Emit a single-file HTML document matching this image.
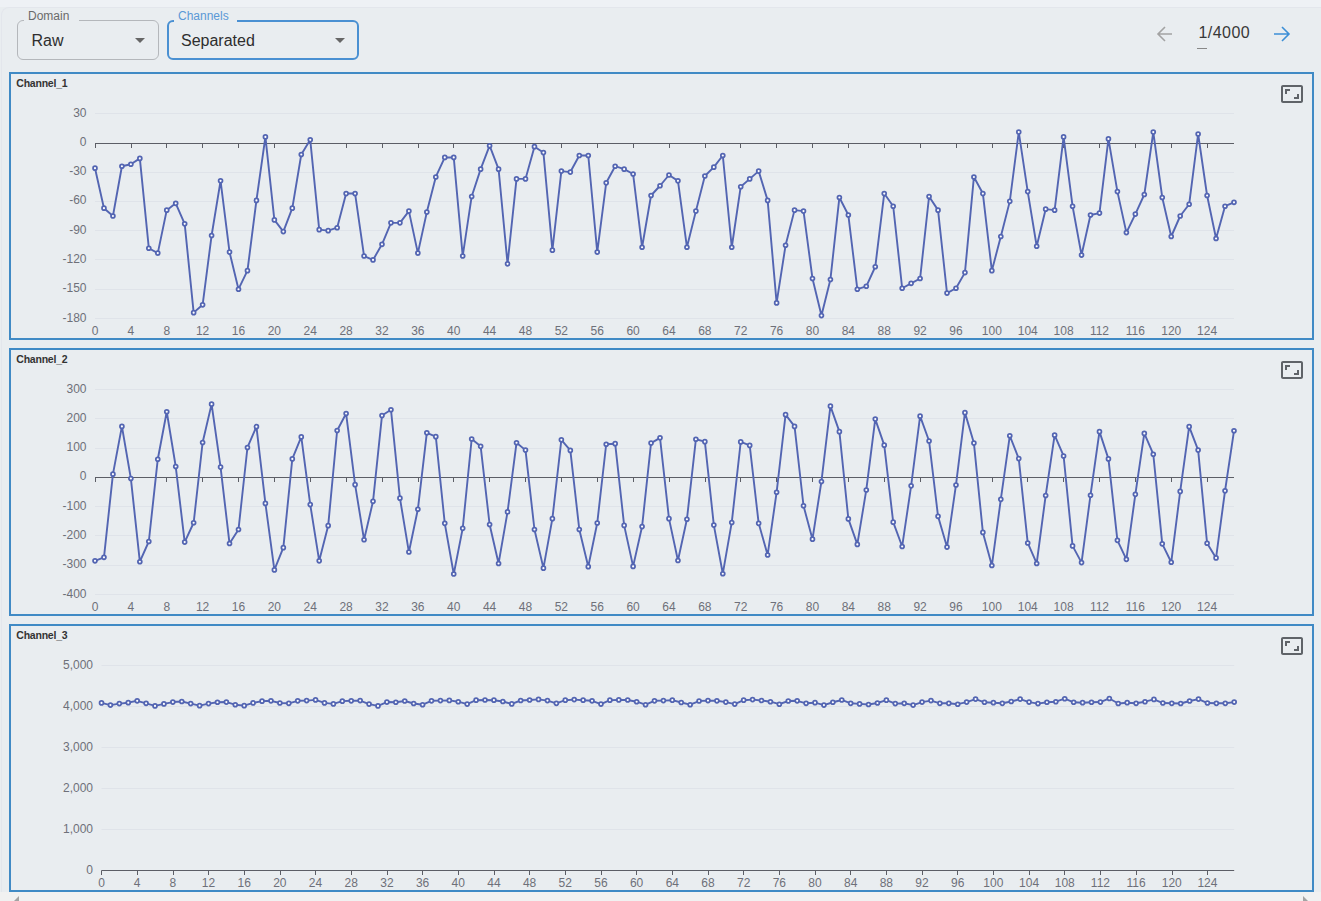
<!DOCTYPE html>
<html><head><meta charset="utf-8">
<style>
html,body{margin:0;padding:0;}
body{width:1321px;height:901px;overflow:hidden;background:#e9edf0;position:relative;font-family:"Liberation Sans",sans-serif;}
.box{position:absolute;left:9px;width:1301px;height:264px;border:2px solid #408ac5;}
.sel{position:absolute;top:20px;height:40px;box-sizing:border-box;border-radius:6px;}
.sel .lab{position:absolute;top:-12px;font-size:12px;line-height:14px;padding:0 4px;background:#e9edf0;}
.sel .val{position:absolute;top:11px;font-size:16px;line-height:18px;color:#2e2e2e;}
.sel .arr{position:absolute;top:18px;width:0;height:0;border-left:5px solid transparent;border-right:5px solid transparent;border-top:5px solid #666;}
svg{position:absolute;left:0;top:0;}
.yl,.xl{font-size:12px;fill:#6e7079;font-family:"Liberation Sans",sans-serif;}
.tt{font-size:10.5px;font-weight:bold;fill:#333;letter-spacing:-0.22px;font-family:"Liberation Sans",sans-serif;}
</style></head><body>
<div style="position:absolute;left:0;top:0;width:1321px;height:7px;background:#eef1f5;"></div>
<div style="position:absolute;left:1px;top:7px;width:1330px;height:900px;border-top:1px solid #e3e6ec;border-left:1px solid #e3e6ec;border-radius:8px 0 0 0;box-sizing:border-box;"></div>
<div style="position:absolute;left:0;top:892px;width:1321px;height:9px;background:#f1f1f1;"></div>
<div style="position:absolute;left:14px;top:896px;width:0;height:0;border-right:5px solid #a3a3a3;border-top:5px solid transparent;border-bottom:5px solid transparent;"></div>
<div style="position:absolute;left:1303px;top:896px;width:0;height:0;border-left:5px solid #a3a3a3;border-top:5px solid transparent;border-bottom:5px solid transparent;"></div>
<div class="sel" style="left:17px;width:142px;border:1px solid #b4b7bb;">
  <div class="lab" style="left:6px;color:#6a6a6a;padding:0 10px 0 4px;">Domain</div>
  <div class="val" style="left:13.5px;">Raw</div>
  <div class="arr" style="left:117px;top:17px;"></div>
</div>
<div class="sel" style="left:167px;width:192px;border:2px solid #4a90d2;">
  <div class="lab" style="left:5px;top:-13px;color:#5a98d6;padding:0 8px 0 4px;">Channels</div>
  <div class="val" style="left:12px;top:10px;">Separated</div>
  <div class="arr" style="left:166px;top:16px;"></div>
</div>
<div class="box" style="top:72px;"></div>
<div class="box" style="top:348px;"></div>
<div class="box" style="top:624px;"></div>
<svg width="1321" height="901" viewBox="0 0 1321 901">
<g stroke="#a3a3a3" stroke-width="1.6" fill="none"><path d="M1172 34H1158M1165 27L1158 34L1165 41"/></g>
<text x="1198.5" y="37.8" style="font-size:16px;fill:#383838;letter-spacing:0.45px;font-family:'Liberation Sans',sans-serif;">1/4000</text>
<line x1="1197" y1="48.5" x2="1207" y2="48.5" stroke="#888" stroke-width="1"/>
<g stroke="#3d8fd6" stroke-width="1.6" fill="none"><path d="M1274 34H1289M1282 27L1289 34L1282 41"/></g>
<line x1="95" y1="113.5" x2="1234" y2="113.5" stroke="#dfe3e9" stroke-width="1"/>
<line x1="95" y1="172.5" x2="1234" y2="172.5" stroke="#dfe3e9" stroke-width="1"/>
<line x1="95" y1="201.5" x2="1234" y2="201.5" stroke="#dfe3e9" stroke-width="1"/>
<line x1="95" y1="230.5" x2="1234" y2="230.5" stroke="#dfe3e9" stroke-width="1"/>
<line x1="95" y1="259.5" x2="1234" y2="259.5" stroke="#dfe3e9" stroke-width="1"/>
<line x1="95" y1="289.5" x2="1234" y2="289.5" stroke="#dfe3e9" stroke-width="1"/>
<line x1="95" y1="318.5" x2="1234" y2="318.5" stroke="#dfe3e9" stroke-width="1"/>
<text x="86.5" y="116.5" text-anchor="end" class="yl">30</text>
<text x="86.5" y="145.79" text-anchor="end" class="yl">0</text>
<text x="86.5" y="175.07" text-anchor="end" class="yl">-30</text>
<text x="86.5" y="204.36" text-anchor="end" class="yl">-60</text>
<text x="86.5" y="233.64" text-anchor="end" class="yl">-90</text>
<text x="86.5" y="262.93" text-anchor="end" class="yl">-120</text>
<text x="86.5" y="292.21" text-anchor="end" class="yl">-150</text>
<text x="86.5" y="321.5" text-anchor="end" class="yl">-180</text>
<line x1="95" y1="143.5" x2="1234" y2="143.5" stroke="#5c5e66" stroke-width="1"/>
<line x1="95.5" y1="143.5" x2="95.5" y2="148.0" stroke="#5c5e66" stroke-width="1"/>
<text x="95" y="334.7" text-anchor="middle" class="xl">0</text>
<line x1="131.5" y1="143.5" x2="131.5" y2="148.0" stroke="#5c5e66" stroke-width="1"/>
<text x="130.87" y="334.7" text-anchor="middle" class="xl">4</text>
<line x1="166.5" y1="143.5" x2="166.5" y2="148.0" stroke="#5c5e66" stroke-width="1"/>
<text x="166.75" y="334.7" text-anchor="middle" class="xl">8</text>
<line x1="202.5" y1="143.5" x2="202.5" y2="148.0" stroke="#5c5e66" stroke-width="1"/>
<text x="202.62" y="334.7" text-anchor="middle" class="xl">12</text>
<line x1="238.5" y1="143.5" x2="238.5" y2="148.0" stroke="#5c5e66" stroke-width="1"/>
<text x="238.5" y="334.7" text-anchor="middle" class="xl">16</text>
<line x1="274.5" y1="143.5" x2="274.5" y2="148.0" stroke="#5c5e66" stroke-width="1"/>
<text x="274.37" y="334.7" text-anchor="middle" class="xl">20</text>
<line x1="310.5" y1="143.5" x2="310.5" y2="148.0" stroke="#5c5e66" stroke-width="1"/>
<text x="310.24" y="334.7" text-anchor="middle" class="xl">24</text>
<line x1="346.5" y1="143.5" x2="346.5" y2="148.0" stroke="#5c5e66" stroke-width="1"/>
<text x="346.12" y="334.7" text-anchor="middle" class="xl">28</text>
<line x1="382.5" y1="143.5" x2="382.5" y2="148.0" stroke="#5c5e66" stroke-width="1"/>
<text x="381.99" y="334.7" text-anchor="middle" class="xl">32</text>
<line x1="418.5" y1="143.5" x2="418.5" y2="148.0" stroke="#5c5e66" stroke-width="1"/>
<text x="417.87" y="334.7" text-anchor="middle" class="xl">36</text>
<line x1="453.5" y1="143.5" x2="453.5" y2="148.0" stroke="#5c5e66" stroke-width="1"/>
<text x="453.74" y="334.7" text-anchor="middle" class="xl">40</text>
<line x1="489.5" y1="143.5" x2="489.5" y2="148.0" stroke="#5c5e66" stroke-width="1"/>
<text x="489.61" y="334.7" text-anchor="middle" class="xl">44</text>
<line x1="525.5" y1="143.5" x2="525.5" y2="148.0" stroke="#5c5e66" stroke-width="1"/>
<text x="525.49" y="334.7" text-anchor="middle" class="xl">48</text>
<line x1="561.5" y1="143.5" x2="561.5" y2="148.0" stroke="#5c5e66" stroke-width="1"/>
<text x="561.36" y="334.7" text-anchor="middle" class="xl">52</text>
<line x1="597.5" y1="143.5" x2="597.5" y2="148.0" stroke="#5c5e66" stroke-width="1"/>
<text x="597.24" y="334.7" text-anchor="middle" class="xl">56</text>
<line x1="633.5" y1="143.5" x2="633.5" y2="148.0" stroke="#5c5e66" stroke-width="1"/>
<text x="633.11" y="334.7" text-anchor="middle" class="xl">60</text>
<line x1="669.5" y1="143.5" x2="669.5" y2="148.0" stroke="#5c5e66" stroke-width="1"/>
<text x="668.98" y="334.7" text-anchor="middle" class="xl">64</text>
<line x1="705.5" y1="143.5" x2="705.5" y2="148.0" stroke="#5c5e66" stroke-width="1"/>
<text x="704.86" y="334.7" text-anchor="middle" class="xl">68</text>
<line x1="740.5" y1="143.5" x2="740.5" y2="148.0" stroke="#5c5e66" stroke-width="1"/>
<text x="740.73" y="334.7" text-anchor="middle" class="xl">72</text>
<line x1="776.5" y1="143.5" x2="776.5" y2="148.0" stroke="#5c5e66" stroke-width="1"/>
<text x="776.61" y="334.7" text-anchor="middle" class="xl">76</text>
<line x1="812.5" y1="143.5" x2="812.5" y2="148.0" stroke="#5c5e66" stroke-width="1"/>
<text x="812.48" y="334.7" text-anchor="middle" class="xl">80</text>
<line x1="848.5" y1="143.5" x2="848.5" y2="148.0" stroke="#5c5e66" stroke-width="1"/>
<text x="848.35" y="334.7" text-anchor="middle" class="xl">84</text>
<line x1="884.5" y1="143.5" x2="884.5" y2="148.0" stroke="#5c5e66" stroke-width="1"/>
<text x="884.23" y="334.7" text-anchor="middle" class="xl">88</text>
<line x1="920.5" y1="143.5" x2="920.5" y2="148.0" stroke="#5c5e66" stroke-width="1"/>
<text x="920.1" y="334.7" text-anchor="middle" class="xl">92</text>
<line x1="956.5" y1="143.5" x2="956.5" y2="148.0" stroke="#5c5e66" stroke-width="1"/>
<text x="955.98" y="334.7" text-anchor="middle" class="xl">96</text>
<line x1="992.5" y1="143.5" x2="992.5" y2="148.0" stroke="#5c5e66" stroke-width="1"/>
<text x="991.85" y="334.7" text-anchor="middle" class="xl">100</text>
<line x1="1027.5" y1="143.5" x2="1027.5" y2="148.0" stroke="#5c5e66" stroke-width="1"/>
<text x="1027.72" y="334.7" text-anchor="middle" class="xl">104</text>
<line x1="1063.5" y1="143.5" x2="1063.5" y2="148.0" stroke="#5c5e66" stroke-width="1"/>
<text x="1063.6" y="334.7" text-anchor="middle" class="xl">108</text>
<line x1="1099.5" y1="143.5" x2="1099.5" y2="148.0" stroke="#5c5e66" stroke-width="1"/>
<text x="1099.47" y="334.7" text-anchor="middle" class="xl">112</text>
<line x1="1135.5" y1="143.5" x2="1135.5" y2="148.0" stroke="#5c5e66" stroke-width="1"/>
<text x="1135.35" y="334.7" text-anchor="middle" class="xl">116</text>
<line x1="1171.5" y1="143.5" x2="1171.5" y2="148.0" stroke="#5c5e66" stroke-width="1"/>
<text x="1171.22" y="334.7" text-anchor="middle" class="xl">120</text>
<line x1="1207.5" y1="143.5" x2="1207.5" y2="148.0" stroke="#5c5e66" stroke-width="1"/>
<text x="1207.09" y="334.7" text-anchor="middle" class="xl">124</text>
<polyline points="95,168.17 103.97,208.19 112.94,216 121.91,166.21 130.87,164.26 139.84,158.4 148.81,248.21 157.78,253.1 166.75,210.14 175.72,203.31 184.69,223.81 193.65,312.64 202.62,304.83 211.59,235.52 220.56,180.86 229.53,252.12 238.5,289.21 247.46,270.67 256.43,200.38 265.4,136.93 274.37,219.9 283.34,231.62 292.31,208.19 301.28,154.5 310.24,139.86 319.21,229.67 328.18,230.64 337.15,227.71 346.12,193.55 355.09,193.55 364.06,256.02 373.02,259.93 381.99,244.31 390.96,222.83 399.93,222.83 408.9,211.12 417.87,253.1 426.83,212.1 435.8,176.95 444.77,157.43 453.74,157.43 462.71,256.02 471.68,196.48 480.65,169.14 489.61,145.71 498.58,169.14 507.55,263.83 516.52,178.9 525.49,178.9 534.46,146.69 543.43,152.55 552.39,250.17 561.36,171.1 570.33,172.07 579.3,155.48 588.27,155.48 597.24,252.12 606.2,182.81 615.17,166.21 624.14,169.14 633.11,174.02 642.08,247.24 651.05,195.5 660.02,185.74 668.98,175 677.95,180.86 686.92,247.24 695.89,211.12 704.86,175.98 713.83,167.19 722.8,155.48 731.76,247.24 740.73,186.71 749.7,178.9 758.67,171.1 767.64,200.38 776.61,302.88 785.57,245.29 794.54,210.14 803.51,211.12 812.48,278.48 821.45,315.57 830.42,279.45 839.39,197.45 848.35,215.02 857.32,289.21 866.29,286.29 875.26,266.76 884.23,193.55 893.2,206.24 902.17,288.24 911.13,283.36 920.1,278.48 929.07,196.48 938.04,210.14 947.01,293.12 955.98,288.24 964.94,272.62 973.91,176.95 982.88,193.55 991.85,270.67 1000.82,236.5 1009.79,201.36 1018.76,132.05 1027.72,191.6 1036.69,246.26 1045.66,209.17 1054.63,210.14 1063.6,136.93 1072.57,206.24 1081.54,255.05 1090.5,215.02 1099.47,213.07 1108.44,138.88 1117.41,191.6 1126.38,232.6 1135.35,214.05 1144.31,194.52 1153.28,132.05 1162.25,197.45 1171.22,236.5 1180.19,216 1189.16,204.29 1198.13,134 1207.09,195.5 1216.06,238.45 1225.03,206.24 1234,202.33" fill="none" stroke="#5365b2" stroke-width="1.9" stroke-linejoin="round"/>
<circle cx="95" cy="168.17" r="1.95" fill="#fff" stroke="#5365b2" stroke-width="1.75"/>
<circle cx="103.97" cy="208.19" r="1.95" fill="#fff" stroke="#5365b2" stroke-width="1.75"/>
<circle cx="112.94" cy="216" r="1.95" fill="#fff" stroke="#5365b2" stroke-width="1.75"/>
<circle cx="121.91" cy="166.21" r="1.95" fill="#fff" stroke="#5365b2" stroke-width="1.75"/>
<circle cx="130.87" cy="164.26" r="1.95" fill="#fff" stroke="#5365b2" stroke-width="1.75"/>
<circle cx="139.84" cy="158.4" r="1.95" fill="#fff" stroke="#5365b2" stroke-width="1.75"/>
<circle cx="148.81" cy="248.21" r="1.95" fill="#fff" stroke="#5365b2" stroke-width="1.75"/>
<circle cx="157.78" cy="253.1" r="1.95" fill="#fff" stroke="#5365b2" stroke-width="1.75"/>
<circle cx="166.75" cy="210.14" r="1.95" fill="#fff" stroke="#5365b2" stroke-width="1.75"/>
<circle cx="175.72" cy="203.31" r="1.95" fill="#fff" stroke="#5365b2" stroke-width="1.75"/>
<circle cx="184.69" cy="223.81" r="1.95" fill="#fff" stroke="#5365b2" stroke-width="1.75"/>
<circle cx="193.65" cy="312.64" r="1.95" fill="#fff" stroke="#5365b2" stroke-width="1.75"/>
<circle cx="202.62" cy="304.83" r="1.95" fill="#fff" stroke="#5365b2" stroke-width="1.75"/>
<circle cx="211.59" cy="235.52" r="1.95" fill="#fff" stroke="#5365b2" stroke-width="1.75"/>
<circle cx="220.56" cy="180.86" r="1.95" fill="#fff" stroke="#5365b2" stroke-width="1.75"/>
<circle cx="229.53" cy="252.12" r="1.95" fill="#fff" stroke="#5365b2" stroke-width="1.75"/>
<circle cx="238.5" cy="289.21" r="1.95" fill="#fff" stroke="#5365b2" stroke-width="1.75"/>
<circle cx="247.46" cy="270.67" r="1.95" fill="#fff" stroke="#5365b2" stroke-width="1.75"/>
<circle cx="256.43" cy="200.38" r="1.95" fill="#fff" stroke="#5365b2" stroke-width="1.75"/>
<circle cx="265.4" cy="136.93" r="1.95" fill="#fff" stroke="#5365b2" stroke-width="1.75"/>
<circle cx="274.37" cy="219.9" r="1.95" fill="#fff" stroke="#5365b2" stroke-width="1.75"/>
<circle cx="283.34" cy="231.62" r="1.95" fill="#fff" stroke="#5365b2" stroke-width="1.75"/>
<circle cx="292.31" cy="208.19" r="1.95" fill="#fff" stroke="#5365b2" stroke-width="1.75"/>
<circle cx="301.28" cy="154.5" r="1.95" fill="#fff" stroke="#5365b2" stroke-width="1.75"/>
<circle cx="310.24" cy="139.86" r="1.95" fill="#fff" stroke="#5365b2" stroke-width="1.75"/>
<circle cx="319.21" cy="229.67" r="1.95" fill="#fff" stroke="#5365b2" stroke-width="1.75"/>
<circle cx="328.18" cy="230.64" r="1.95" fill="#fff" stroke="#5365b2" stroke-width="1.75"/>
<circle cx="337.15" cy="227.71" r="1.95" fill="#fff" stroke="#5365b2" stroke-width="1.75"/>
<circle cx="346.12" cy="193.55" r="1.95" fill="#fff" stroke="#5365b2" stroke-width="1.75"/>
<circle cx="355.09" cy="193.55" r="1.95" fill="#fff" stroke="#5365b2" stroke-width="1.75"/>
<circle cx="364.06" cy="256.02" r="1.95" fill="#fff" stroke="#5365b2" stroke-width="1.75"/>
<circle cx="373.02" cy="259.93" r="1.95" fill="#fff" stroke="#5365b2" stroke-width="1.75"/>
<circle cx="381.99" cy="244.31" r="1.95" fill="#fff" stroke="#5365b2" stroke-width="1.75"/>
<circle cx="390.96" cy="222.83" r="1.95" fill="#fff" stroke="#5365b2" stroke-width="1.75"/>
<circle cx="399.93" cy="222.83" r="1.95" fill="#fff" stroke="#5365b2" stroke-width="1.75"/>
<circle cx="408.9" cy="211.12" r="1.95" fill="#fff" stroke="#5365b2" stroke-width="1.75"/>
<circle cx="417.87" cy="253.1" r="1.95" fill="#fff" stroke="#5365b2" stroke-width="1.75"/>
<circle cx="426.83" cy="212.1" r="1.95" fill="#fff" stroke="#5365b2" stroke-width="1.75"/>
<circle cx="435.8" cy="176.95" r="1.95" fill="#fff" stroke="#5365b2" stroke-width="1.75"/>
<circle cx="444.77" cy="157.43" r="1.95" fill="#fff" stroke="#5365b2" stroke-width="1.75"/>
<circle cx="453.74" cy="157.43" r="1.95" fill="#fff" stroke="#5365b2" stroke-width="1.75"/>
<circle cx="462.71" cy="256.02" r="1.95" fill="#fff" stroke="#5365b2" stroke-width="1.75"/>
<circle cx="471.68" cy="196.48" r="1.95" fill="#fff" stroke="#5365b2" stroke-width="1.75"/>
<circle cx="480.65" cy="169.14" r="1.95" fill="#fff" stroke="#5365b2" stroke-width="1.75"/>
<circle cx="489.61" cy="145.71" r="1.95" fill="#fff" stroke="#5365b2" stroke-width="1.75"/>
<circle cx="498.58" cy="169.14" r="1.95" fill="#fff" stroke="#5365b2" stroke-width="1.75"/>
<circle cx="507.55" cy="263.83" r="1.95" fill="#fff" stroke="#5365b2" stroke-width="1.75"/>
<circle cx="516.52" cy="178.9" r="1.95" fill="#fff" stroke="#5365b2" stroke-width="1.75"/>
<circle cx="525.49" cy="178.9" r="1.95" fill="#fff" stroke="#5365b2" stroke-width="1.75"/>
<circle cx="534.46" cy="146.69" r="1.95" fill="#fff" stroke="#5365b2" stroke-width="1.75"/>
<circle cx="543.43" cy="152.55" r="1.95" fill="#fff" stroke="#5365b2" stroke-width="1.75"/>
<circle cx="552.39" cy="250.17" r="1.95" fill="#fff" stroke="#5365b2" stroke-width="1.75"/>
<circle cx="561.36" cy="171.1" r="1.95" fill="#fff" stroke="#5365b2" stroke-width="1.75"/>
<circle cx="570.33" cy="172.07" r="1.95" fill="#fff" stroke="#5365b2" stroke-width="1.75"/>
<circle cx="579.3" cy="155.48" r="1.95" fill="#fff" stroke="#5365b2" stroke-width="1.75"/>
<circle cx="588.27" cy="155.48" r="1.95" fill="#fff" stroke="#5365b2" stroke-width="1.75"/>
<circle cx="597.24" cy="252.12" r="1.95" fill="#fff" stroke="#5365b2" stroke-width="1.75"/>
<circle cx="606.2" cy="182.81" r="1.95" fill="#fff" stroke="#5365b2" stroke-width="1.75"/>
<circle cx="615.17" cy="166.21" r="1.95" fill="#fff" stroke="#5365b2" stroke-width="1.75"/>
<circle cx="624.14" cy="169.14" r="1.95" fill="#fff" stroke="#5365b2" stroke-width="1.75"/>
<circle cx="633.11" cy="174.02" r="1.95" fill="#fff" stroke="#5365b2" stroke-width="1.75"/>
<circle cx="642.08" cy="247.24" r="1.95" fill="#fff" stroke="#5365b2" stroke-width="1.75"/>
<circle cx="651.05" cy="195.5" r="1.95" fill="#fff" stroke="#5365b2" stroke-width="1.75"/>
<circle cx="660.02" cy="185.74" r="1.95" fill="#fff" stroke="#5365b2" stroke-width="1.75"/>
<circle cx="668.98" cy="175" r="1.95" fill="#fff" stroke="#5365b2" stroke-width="1.75"/>
<circle cx="677.95" cy="180.86" r="1.95" fill="#fff" stroke="#5365b2" stroke-width="1.75"/>
<circle cx="686.92" cy="247.24" r="1.95" fill="#fff" stroke="#5365b2" stroke-width="1.75"/>
<circle cx="695.89" cy="211.12" r="1.95" fill="#fff" stroke="#5365b2" stroke-width="1.75"/>
<circle cx="704.86" cy="175.98" r="1.95" fill="#fff" stroke="#5365b2" stroke-width="1.75"/>
<circle cx="713.83" cy="167.19" r="1.95" fill="#fff" stroke="#5365b2" stroke-width="1.75"/>
<circle cx="722.8" cy="155.48" r="1.95" fill="#fff" stroke="#5365b2" stroke-width="1.75"/>
<circle cx="731.76" cy="247.24" r="1.95" fill="#fff" stroke="#5365b2" stroke-width="1.75"/>
<circle cx="740.73" cy="186.71" r="1.95" fill="#fff" stroke="#5365b2" stroke-width="1.75"/>
<circle cx="749.7" cy="178.9" r="1.95" fill="#fff" stroke="#5365b2" stroke-width="1.75"/>
<circle cx="758.67" cy="171.1" r="1.95" fill="#fff" stroke="#5365b2" stroke-width="1.75"/>
<circle cx="767.64" cy="200.38" r="1.95" fill="#fff" stroke="#5365b2" stroke-width="1.75"/>
<circle cx="776.61" cy="302.88" r="1.95" fill="#fff" stroke="#5365b2" stroke-width="1.75"/>
<circle cx="785.57" cy="245.29" r="1.95" fill="#fff" stroke="#5365b2" stroke-width="1.75"/>
<circle cx="794.54" cy="210.14" r="1.95" fill="#fff" stroke="#5365b2" stroke-width="1.75"/>
<circle cx="803.51" cy="211.12" r="1.95" fill="#fff" stroke="#5365b2" stroke-width="1.75"/>
<circle cx="812.48" cy="278.48" r="1.95" fill="#fff" stroke="#5365b2" stroke-width="1.75"/>
<circle cx="821.45" cy="315.57" r="1.95" fill="#fff" stroke="#5365b2" stroke-width="1.75"/>
<circle cx="830.42" cy="279.45" r="1.95" fill="#fff" stroke="#5365b2" stroke-width="1.75"/>
<circle cx="839.39" cy="197.45" r="1.95" fill="#fff" stroke="#5365b2" stroke-width="1.75"/>
<circle cx="848.35" cy="215.02" r="1.95" fill="#fff" stroke="#5365b2" stroke-width="1.75"/>
<circle cx="857.32" cy="289.21" r="1.95" fill="#fff" stroke="#5365b2" stroke-width="1.75"/>
<circle cx="866.29" cy="286.29" r="1.95" fill="#fff" stroke="#5365b2" stroke-width="1.75"/>
<circle cx="875.26" cy="266.76" r="1.95" fill="#fff" stroke="#5365b2" stroke-width="1.75"/>
<circle cx="884.23" cy="193.55" r="1.95" fill="#fff" stroke="#5365b2" stroke-width="1.75"/>
<circle cx="893.2" cy="206.24" r="1.95" fill="#fff" stroke="#5365b2" stroke-width="1.75"/>
<circle cx="902.17" cy="288.24" r="1.95" fill="#fff" stroke="#5365b2" stroke-width="1.75"/>
<circle cx="911.13" cy="283.36" r="1.95" fill="#fff" stroke="#5365b2" stroke-width="1.75"/>
<circle cx="920.1" cy="278.48" r="1.95" fill="#fff" stroke="#5365b2" stroke-width="1.75"/>
<circle cx="929.07" cy="196.48" r="1.95" fill="#fff" stroke="#5365b2" stroke-width="1.75"/>
<circle cx="938.04" cy="210.14" r="1.95" fill="#fff" stroke="#5365b2" stroke-width="1.75"/>
<circle cx="947.01" cy="293.12" r="1.95" fill="#fff" stroke="#5365b2" stroke-width="1.75"/>
<circle cx="955.98" cy="288.24" r="1.95" fill="#fff" stroke="#5365b2" stroke-width="1.75"/>
<circle cx="964.94" cy="272.62" r="1.95" fill="#fff" stroke="#5365b2" stroke-width="1.75"/>
<circle cx="973.91" cy="176.95" r="1.95" fill="#fff" stroke="#5365b2" stroke-width="1.75"/>
<circle cx="982.88" cy="193.55" r="1.95" fill="#fff" stroke="#5365b2" stroke-width="1.75"/>
<circle cx="991.85" cy="270.67" r="1.95" fill="#fff" stroke="#5365b2" stroke-width="1.75"/>
<circle cx="1000.82" cy="236.5" r="1.95" fill="#fff" stroke="#5365b2" stroke-width="1.75"/>
<circle cx="1009.79" cy="201.36" r="1.95" fill="#fff" stroke="#5365b2" stroke-width="1.75"/>
<circle cx="1018.76" cy="132.05" r="1.95" fill="#fff" stroke="#5365b2" stroke-width="1.75"/>
<circle cx="1027.72" cy="191.6" r="1.95" fill="#fff" stroke="#5365b2" stroke-width="1.75"/>
<circle cx="1036.69" cy="246.26" r="1.95" fill="#fff" stroke="#5365b2" stroke-width="1.75"/>
<circle cx="1045.66" cy="209.17" r="1.95" fill="#fff" stroke="#5365b2" stroke-width="1.75"/>
<circle cx="1054.63" cy="210.14" r="1.95" fill="#fff" stroke="#5365b2" stroke-width="1.75"/>
<circle cx="1063.6" cy="136.93" r="1.95" fill="#fff" stroke="#5365b2" stroke-width="1.75"/>
<circle cx="1072.57" cy="206.24" r="1.95" fill="#fff" stroke="#5365b2" stroke-width="1.75"/>
<circle cx="1081.54" cy="255.05" r="1.95" fill="#fff" stroke="#5365b2" stroke-width="1.75"/>
<circle cx="1090.5" cy="215.02" r="1.95" fill="#fff" stroke="#5365b2" stroke-width="1.75"/>
<circle cx="1099.47" cy="213.07" r="1.95" fill="#fff" stroke="#5365b2" stroke-width="1.75"/>
<circle cx="1108.44" cy="138.88" r="1.95" fill="#fff" stroke="#5365b2" stroke-width="1.75"/>
<circle cx="1117.41" cy="191.6" r="1.95" fill="#fff" stroke="#5365b2" stroke-width="1.75"/>
<circle cx="1126.38" cy="232.6" r="1.95" fill="#fff" stroke="#5365b2" stroke-width="1.75"/>
<circle cx="1135.35" cy="214.05" r="1.95" fill="#fff" stroke="#5365b2" stroke-width="1.75"/>
<circle cx="1144.31" cy="194.52" r="1.95" fill="#fff" stroke="#5365b2" stroke-width="1.75"/>
<circle cx="1153.28" cy="132.05" r="1.95" fill="#fff" stroke="#5365b2" stroke-width="1.75"/>
<circle cx="1162.25" cy="197.45" r="1.95" fill="#fff" stroke="#5365b2" stroke-width="1.75"/>
<circle cx="1171.22" cy="236.5" r="1.95" fill="#fff" stroke="#5365b2" stroke-width="1.75"/>
<circle cx="1180.19" cy="216" r="1.95" fill="#fff" stroke="#5365b2" stroke-width="1.75"/>
<circle cx="1189.16" cy="204.29" r="1.95" fill="#fff" stroke="#5365b2" stroke-width="1.75"/>
<circle cx="1198.13" cy="134" r="1.95" fill="#fff" stroke="#5365b2" stroke-width="1.75"/>
<circle cx="1207.09" cy="195.5" r="1.95" fill="#fff" stroke="#5365b2" stroke-width="1.75"/>
<circle cx="1216.06" cy="238.45" r="1.95" fill="#fff" stroke="#5365b2" stroke-width="1.75"/>
<circle cx="1225.03" cy="206.24" r="1.95" fill="#fff" stroke="#5365b2" stroke-width="1.75"/>
<circle cx="1234" cy="202.33" r="1.95" fill="#fff" stroke="#5365b2" stroke-width="1.75"/>
<text x="16.3" y="86.7" class="tt">Channel_1</text>
<g transform="translate(1280,82)"><path fill="#5f6368" d="M19 12h-2v3h-3v2h5v-5zM7 9h3V7H5v5h2V9zm14-6H3c-1.1 0-2 .9-2 2v14c0 1.1.9 2 2 2h18c1.1 0 2-.9 2-2V5c0-1.1-.9-2-2-2zm0 16.01H3V4.99h18v14.02z"/></g>
<line x1="95" y1="389.5" x2="1234" y2="389.5" stroke="#dfe3e9" stroke-width="1"/>
<line x1="95" y1="418.5" x2="1234" y2="418.5" stroke="#dfe3e9" stroke-width="1"/>
<line x1="95" y1="448.5" x2="1234" y2="448.5" stroke="#dfe3e9" stroke-width="1"/>
<line x1="95" y1="506.5" x2="1234" y2="506.5" stroke="#dfe3e9" stroke-width="1"/>
<line x1="95" y1="535.5" x2="1234" y2="535.5" stroke="#dfe3e9" stroke-width="1"/>
<line x1="95" y1="565.5" x2="1234" y2="565.5" stroke="#dfe3e9" stroke-width="1"/>
<line x1="95" y1="594.5" x2="1234" y2="594.5" stroke="#dfe3e9" stroke-width="1"/>
<text x="86.5" y="392.5" text-anchor="end" class="yl">300</text>
<text x="86.5" y="421.79" text-anchor="end" class="yl">200</text>
<text x="86.5" y="451.07" text-anchor="end" class="yl">100</text>
<text x="86.5" y="480.36" text-anchor="end" class="yl">0</text>
<text x="86.5" y="509.64" text-anchor="end" class="yl">-100</text>
<text x="86.5" y="538.93" text-anchor="end" class="yl">-200</text>
<text x="86.5" y="568.21" text-anchor="end" class="yl">-300</text>
<text x="86.5" y="597.5" text-anchor="end" class="yl">-400</text>
<line x1="95" y1="477.5" x2="1234" y2="477.5" stroke="#5c5e66" stroke-width="1"/>
<line x1="95.5" y1="477.5" x2="95.5" y2="482.0" stroke="#5c5e66" stroke-width="1"/>
<text x="95" y="610.7" text-anchor="middle" class="xl">0</text>
<line x1="131.5" y1="477.5" x2="131.5" y2="482.0" stroke="#5c5e66" stroke-width="1"/>
<text x="130.87" y="610.7" text-anchor="middle" class="xl">4</text>
<line x1="166.5" y1="477.5" x2="166.5" y2="482.0" stroke="#5c5e66" stroke-width="1"/>
<text x="166.75" y="610.7" text-anchor="middle" class="xl">8</text>
<line x1="202.5" y1="477.5" x2="202.5" y2="482.0" stroke="#5c5e66" stroke-width="1"/>
<text x="202.62" y="610.7" text-anchor="middle" class="xl">12</text>
<line x1="238.5" y1="477.5" x2="238.5" y2="482.0" stroke="#5c5e66" stroke-width="1"/>
<text x="238.5" y="610.7" text-anchor="middle" class="xl">16</text>
<line x1="274.5" y1="477.5" x2="274.5" y2="482.0" stroke="#5c5e66" stroke-width="1"/>
<text x="274.37" y="610.7" text-anchor="middle" class="xl">20</text>
<line x1="310.5" y1="477.5" x2="310.5" y2="482.0" stroke="#5c5e66" stroke-width="1"/>
<text x="310.24" y="610.7" text-anchor="middle" class="xl">24</text>
<line x1="346.5" y1="477.5" x2="346.5" y2="482.0" stroke="#5c5e66" stroke-width="1"/>
<text x="346.12" y="610.7" text-anchor="middle" class="xl">28</text>
<line x1="382.5" y1="477.5" x2="382.5" y2="482.0" stroke="#5c5e66" stroke-width="1"/>
<text x="381.99" y="610.7" text-anchor="middle" class="xl">32</text>
<line x1="418.5" y1="477.5" x2="418.5" y2="482.0" stroke="#5c5e66" stroke-width="1"/>
<text x="417.87" y="610.7" text-anchor="middle" class="xl">36</text>
<line x1="453.5" y1="477.5" x2="453.5" y2="482.0" stroke="#5c5e66" stroke-width="1"/>
<text x="453.74" y="610.7" text-anchor="middle" class="xl">40</text>
<line x1="489.5" y1="477.5" x2="489.5" y2="482.0" stroke="#5c5e66" stroke-width="1"/>
<text x="489.61" y="610.7" text-anchor="middle" class="xl">44</text>
<line x1="525.5" y1="477.5" x2="525.5" y2="482.0" stroke="#5c5e66" stroke-width="1"/>
<text x="525.49" y="610.7" text-anchor="middle" class="xl">48</text>
<line x1="561.5" y1="477.5" x2="561.5" y2="482.0" stroke="#5c5e66" stroke-width="1"/>
<text x="561.36" y="610.7" text-anchor="middle" class="xl">52</text>
<line x1="597.5" y1="477.5" x2="597.5" y2="482.0" stroke="#5c5e66" stroke-width="1"/>
<text x="597.24" y="610.7" text-anchor="middle" class="xl">56</text>
<line x1="633.5" y1="477.5" x2="633.5" y2="482.0" stroke="#5c5e66" stroke-width="1"/>
<text x="633.11" y="610.7" text-anchor="middle" class="xl">60</text>
<line x1="669.5" y1="477.5" x2="669.5" y2="482.0" stroke="#5c5e66" stroke-width="1"/>
<text x="668.98" y="610.7" text-anchor="middle" class="xl">64</text>
<line x1="705.5" y1="477.5" x2="705.5" y2="482.0" stroke="#5c5e66" stroke-width="1"/>
<text x="704.86" y="610.7" text-anchor="middle" class="xl">68</text>
<line x1="740.5" y1="477.5" x2="740.5" y2="482.0" stroke="#5c5e66" stroke-width="1"/>
<text x="740.73" y="610.7" text-anchor="middle" class="xl">72</text>
<line x1="776.5" y1="477.5" x2="776.5" y2="482.0" stroke="#5c5e66" stroke-width="1"/>
<text x="776.61" y="610.7" text-anchor="middle" class="xl">76</text>
<line x1="812.5" y1="477.5" x2="812.5" y2="482.0" stroke="#5c5e66" stroke-width="1"/>
<text x="812.48" y="610.7" text-anchor="middle" class="xl">80</text>
<line x1="848.5" y1="477.5" x2="848.5" y2="482.0" stroke="#5c5e66" stroke-width="1"/>
<text x="848.35" y="610.7" text-anchor="middle" class="xl">84</text>
<line x1="884.5" y1="477.5" x2="884.5" y2="482.0" stroke="#5c5e66" stroke-width="1"/>
<text x="884.23" y="610.7" text-anchor="middle" class="xl">88</text>
<line x1="920.5" y1="477.5" x2="920.5" y2="482.0" stroke="#5c5e66" stroke-width="1"/>
<text x="920.1" y="610.7" text-anchor="middle" class="xl">92</text>
<line x1="956.5" y1="477.5" x2="956.5" y2="482.0" stroke="#5c5e66" stroke-width="1"/>
<text x="955.98" y="610.7" text-anchor="middle" class="xl">96</text>
<line x1="992.5" y1="477.5" x2="992.5" y2="482.0" stroke="#5c5e66" stroke-width="1"/>
<text x="991.85" y="610.7" text-anchor="middle" class="xl">100</text>
<line x1="1027.5" y1="477.5" x2="1027.5" y2="482.0" stroke="#5c5e66" stroke-width="1"/>
<text x="1027.72" y="610.7" text-anchor="middle" class="xl">104</text>
<line x1="1063.5" y1="477.5" x2="1063.5" y2="482.0" stroke="#5c5e66" stroke-width="1"/>
<text x="1063.6" y="610.7" text-anchor="middle" class="xl">108</text>
<line x1="1099.5" y1="477.5" x2="1099.5" y2="482.0" stroke="#5c5e66" stroke-width="1"/>
<text x="1099.47" y="610.7" text-anchor="middle" class="xl">112</text>
<line x1="1135.5" y1="477.5" x2="1135.5" y2="482.0" stroke="#5c5e66" stroke-width="1"/>
<text x="1135.35" y="610.7" text-anchor="middle" class="xl">116</text>
<line x1="1171.5" y1="477.5" x2="1171.5" y2="482.0" stroke="#5c5e66" stroke-width="1"/>
<text x="1171.22" y="610.7" text-anchor="middle" class="xl">120</text>
<line x1="1207.5" y1="477.5" x2="1207.5" y2="482.0" stroke="#5c5e66" stroke-width="1"/>
<text x="1207.09" y="610.7" text-anchor="middle" class="xl">124</text>
<polyline points="95,560.82 103.97,557.31 112.94,474.14 121.91,426.4 130.87,478.53 139.84,561.7 148.81,541.49 157.78,459.2 166.75,411.76 175.72,466.52 184.69,542.08 193.65,522.75 202.62,442.51 211.59,404.14 220.56,467.11 229.53,543.54 238.5,529.49 247.46,447.49 256.43,426.69 265.4,503.42 274.37,569.9 283.34,547.64 292.31,458.91 301.28,436.94 310.24,504.59 319.21,560.82 328.18,525.68 337.15,430.5 346.12,413.51 355.09,484.68 364.06,539.74 373.02,501.37 381.99,415.56 390.96,409.71 399.93,498.15 408.9,552.04 417.87,509.28 426.83,432.84 435.8,436.65 444.77,523.34 453.74,574 462.71,528.31 471.68,438.99 480.65,446.31 489.61,524.51 498.58,563.46 507.55,511.91 516.52,442.8 525.49,450.12 534.46,529.49 543.43,568.14 552.39,518.65 561.36,439.87 570.33,450.41 579.3,529.49 588.27,566.68 597.24,523.04 606.2,444.26 615.17,443.68 624.14,525.39 633.11,566.39 642.08,526.56 651.05,443.09 660.02,437.82 668.98,518.65 677.95,560.53 686.92,519.24 695.89,439.29 704.86,441.63 713.83,525.09 722.8,573.71 731.76,522.46 740.73,441.92 749.7,445.44 758.67,523.34 767.64,554.96 776.61,492.29 785.57,414.69 794.54,426.4 803.51,505.76 812.48,539.15 821.45,481.46 830.42,406.19 839.39,431.67 848.35,518.94 857.32,544.42 866.29,489.95 875.26,419.08 884.23,445.14 893.2,522.16 902.17,546.47 911.13,485.85 920.1,416.15 929.07,441.04 938.04,516.31 947.01,547.06 955.98,484.97 964.94,412.64 973.91,443.09 982.88,532.41 991.85,565.51 1000.82,499.32 1009.79,435.77 1018.76,458.61 1027.72,542.96 1036.69,563.46 1045.66,495.51 1054.63,435.19 1063.6,455.98 1072.57,545.89 1081.54,562.58 1090.5,495.22 1099.47,431.67 1108.44,458.91 1117.41,540.32 1126.38,559.36 1135.35,494.34 1144.31,433.43 1153.28,454.22 1162.25,543.84 1171.22,562.29 1180.19,491.41 1189.16,426.69 1198.13,450.12 1207.09,543.25 1216.06,557.89 1225.03,490.83 1234,430.79" fill="none" stroke="#5365b2" stroke-width="1.9" stroke-linejoin="round"/>
<circle cx="95" cy="560.82" r="1.95" fill="#fff" stroke="#5365b2" stroke-width="1.75"/>
<circle cx="103.97" cy="557.31" r="1.95" fill="#fff" stroke="#5365b2" stroke-width="1.75"/>
<circle cx="112.94" cy="474.14" r="1.95" fill="#fff" stroke="#5365b2" stroke-width="1.75"/>
<circle cx="121.91" cy="426.4" r="1.95" fill="#fff" stroke="#5365b2" stroke-width="1.75"/>
<circle cx="130.87" cy="478.53" r="1.95" fill="#fff" stroke="#5365b2" stroke-width="1.75"/>
<circle cx="139.84" cy="561.7" r="1.95" fill="#fff" stroke="#5365b2" stroke-width="1.75"/>
<circle cx="148.81" cy="541.49" r="1.95" fill="#fff" stroke="#5365b2" stroke-width="1.75"/>
<circle cx="157.78" cy="459.2" r="1.95" fill="#fff" stroke="#5365b2" stroke-width="1.75"/>
<circle cx="166.75" cy="411.76" r="1.95" fill="#fff" stroke="#5365b2" stroke-width="1.75"/>
<circle cx="175.72" cy="466.52" r="1.95" fill="#fff" stroke="#5365b2" stroke-width="1.75"/>
<circle cx="184.69" cy="542.08" r="1.95" fill="#fff" stroke="#5365b2" stroke-width="1.75"/>
<circle cx="193.65" cy="522.75" r="1.95" fill="#fff" stroke="#5365b2" stroke-width="1.75"/>
<circle cx="202.62" cy="442.51" r="1.95" fill="#fff" stroke="#5365b2" stroke-width="1.75"/>
<circle cx="211.59" cy="404.14" r="1.95" fill="#fff" stroke="#5365b2" stroke-width="1.75"/>
<circle cx="220.56" cy="467.11" r="1.95" fill="#fff" stroke="#5365b2" stroke-width="1.75"/>
<circle cx="229.53" cy="543.54" r="1.95" fill="#fff" stroke="#5365b2" stroke-width="1.75"/>
<circle cx="238.5" cy="529.49" r="1.95" fill="#fff" stroke="#5365b2" stroke-width="1.75"/>
<circle cx="247.46" cy="447.49" r="1.95" fill="#fff" stroke="#5365b2" stroke-width="1.75"/>
<circle cx="256.43" cy="426.69" r="1.95" fill="#fff" stroke="#5365b2" stroke-width="1.75"/>
<circle cx="265.4" cy="503.42" r="1.95" fill="#fff" stroke="#5365b2" stroke-width="1.75"/>
<circle cx="274.37" cy="569.9" r="1.95" fill="#fff" stroke="#5365b2" stroke-width="1.75"/>
<circle cx="283.34" cy="547.64" r="1.95" fill="#fff" stroke="#5365b2" stroke-width="1.75"/>
<circle cx="292.31" cy="458.91" r="1.95" fill="#fff" stroke="#5365b2" stroke-width="1.75"/>
<circle cx="301.28" cy="436.94" r="1.95" fill="#fff" stroke="#5365b2" stroke-width="1.75"/>
<circle cx="310.24" cy="504.59" r="1.95" fill="#fff" stroke="#5365b2" stroke-width="1.75"/>
<circle cx="319.21" cy="560.82" r="1.95" fill="#fff" stroke="#5365b2" stroke-width="1.75"/>
<circle cx="328.18" cy="525.68" r="1.95" fill="#fff" stroke="#5365b2" stroke-width="1.75"/>
<circle cx="337.15" cy="430.5" r="1.95" fill="#fff" stroke="#5365b2" stroke-width="1.75"/>
<circle cx="346.12" cy="413.51" r="1.95" fill="#fff" stroke="#5365b2" stroke-width="1.75"/>
<circle cx="355.09" cy="484.68" r="1.95" fill="#fff" stroke="#5365b2" stroke-width="1.75"/>
<circle cx="364.06" cy="539.74" r="1.95" fill="#fff" stroke="#5365b2" stroke-width="1.75"/>
<circle cx="373.02" cy="501.37" r="1.95" fill="#fff" stroke="#5365b2" stroke-width="1.75"/>
<circle cx="381.99" cy="415.56" r="1.95" fill="#fff" stroke="#5365b2" stroke-width="1.75"/>
<circle cx="390.96" cy="409.71" r="1.95" fill="#fff" stroke="#5365b2" stroke-width="1.75"/>
<circle cx="399.93" cy="498.15" r="1.95" fill="#fff" stroke="#5365b2" stroke-width="1.75"/>
<circle cx="408.9" cy="552.04" r="1.95" fill="#fff" stroke="#5365b2" stroke-width="1.75"/>
<circle cx="417.87" cy="509.28" r="1.95" fill="#fff" stroke="#5365b2" stroke-width="1.75"/>
<circle cx="426.83" cy="432.84" r="1.95" fill="#fff" stroke="#5365b2" stroke-width="1.75"/>
<circle cx="435.8" cy="436.65" r="1.95" fill="#fff" stroke="#5365b2" stroke-width="1.75"/>
<circle cx="444.77" cy="523.34" r="1.95" fill="#fff" stroke="#5365b2" stroke-width="1.75"/>
<circle cx="453.74" cy="574" r="1.95" fill="#fff" stroke="#5365b2" stroke-width="1.75"/>
<circle cx="462.71" cy="528.31" r="1.95" fill="#fff" stroke="#5365b2" stroke-width="1.75"/>
<circle cx="471.68" cy="438.99" r="1.95" fill="#fff" stroke="#5365b2" stroke-width="1.75"/>
<circle cx="480.65" cy="446.31" r="1.95" fill="#fff" stroke="#5365b2" stroke-width="1.75"/>
<circle cx="489.61" cy="524.51" r="1.95" fill="#fff" stroke="#5365b2" stroke-width="1.75"/>
<circle cx="498.58" cy="563.46" r="1.95" fill="#fff" stroke="#5365b2" stroke-width="1.75"/>
<circle cx="507.55" cy="511.91" r="1.95" fill="#fff" stroke="#5365b2" stroke-width="1.75"/>
<circle cx="516.52" cy="442.8" r="1.95" fill="#fff" stroke="#5365b2" stroke-width="1.75"/>
<circle cx="525.49" cy="450.12" r="1.95" fill="#fff" stroke="#5365b2" stroke-width="1.75"/>
<circle cx="534.46" cy="529.49" r="1.95" fill="#fff" stroke="#5365b2" stroke-width="1.75"/>
<circle cx="543.43" cy="568.14" r="1.95" fill="#fff" stroke="#5365b2" stroke-width="1.75"/>
<circle cx="552.39" cy="518.65" r="1.95" fill="#fff" stroke="#5365b2" stroke-width="1.75"/>
<circle cx="561.36" cy="439.87" r="1.95" fill="#fff" stroke="#5365b2" stroke-width="1.75"/>
<circle cx="570.33" cy="450.41" r="1.95" fill="#fff" stroke="#5365b2" stroke-width="1.75"/>
<circle cx="579.3" cy="529.49" r="1.95" fill="#fff" stroke="#5365b2" stroke-width="1.75"/>
<circle cx="588.27" cy="566.68" r="1.95" fill="#fff" stroke="#5365b2" stroke-width="1.75"/>
<circle cx="597.24" cy="523.04" r="1.95" fill="#fff" stroke="#5365b2" stroke-width="1.75"/>
<circle cx="606.2" cy="444.26" r="1.95" fill="#fff" stroke="#5365b2" stroke-width="1.75"/>
<circle cx="615.17" cy="443.68" r="1.95" fill="#fff" stroke="#5365b2" stroke-width="1.75"/>
<circle cx="624.14" cy="525.39" r="1.95" fill="#fff" stroke="#5365b2" stroke-width="1.75"/>
<circle cx="633.11" cy="566.39" r="1.95" fill="#fff" stroke="#5365b2" stroke-width="1.75"/>
<circle cx="642.08" cy="526.56" r="1.95" fill="#fff" stroke="#5365b2" stroke-width="1.75"/>
<circle cx="651.05" cy="443.09" r="1.95" fill="#fff" stroke="#5365b2" stroke-width="1.75"/>
<circle cx="660.02" cy="437.82" r="1.95" fill="#fff" stroke="#5365b2" stroke-width="1.75"/>
<circle cx="668.98" cy="518.65" r="1.95" fill="#fff" stroke="#5365b2" stroke-width="1.75"/>
<circle cx="677.95" cy="560.53" r="1.95" fill="#fff" stroke="#5365b2" stroke-width="1.75"/>
<circle cx="686.92" cy="519.24" r="1.95" fill="#fff" stroke="#5365b2" stroke-width="1.75"/>
<circle cx="695.89" cy="439.29" r="1.95" fill="#fff" stroke="#5365b2" stroke-width="1.75"/>
<circle cx="704.86" cy="441.63" r="1.95" fill="#fff" stroke="#5365b2" stroke-width="1.75"/>
<circle cx="713.83" cy="525.09" r="1.95" fill="#fff" stroke="#5365b2" stroke-width="1.75"/>
<circle cx="722.8" cy="573.71" r="1.95" fill="#fff" stroke="#5365b2" stroke-width="1.75"/>
<circle cx="731.76" cy="522.46" r="1.95" fill="#fff" stroke="#5365b2" stroke-width="1.75"/>
<circle cx="740.73" cy="441.92" r="1.95" fill="#fff" stroke="#5365b2" stroke-width="1.75"/>
<circle cx="749.7" cy="445.44" r="1.95" fill="#fff" stroke="#5365b2" stroke-width="1.75"/>
<circle cx="758.67" cy="523.34" r="1.95" fill="#fff" stroke="#5365b2" stroke-width="1.75"/>
<circle cx="767.64" cy="554.96" r="1.95" fill="#fff" stroke="#5365b2" stroke-width="1.75"/>
<circle cx="776.61" cy="492.29" r="1.95" fill="#fff" stroke="#5365b2" stroke-width="1.75"/>
<circle cx="785.57" cy="414.69" r="1.95" fill="#fff" stroke="#5365b2" stroke-width="1.75"/>
<circle cx="794.54" cy="426.4" r="1.95" fill="#fff" stroke="#5365b2" stroke-width="1.75"/>
<circle cx="803.51" cy="505.76" r="1.95" fill="#fff" stroke="#5365b2" stroke-width="1.75"/>
<circle cx="812.48" cy="539.15" r="1.95" fill="#fff" stroke="#5365b2" stroke-width="1.75"/>
<circle cx="821.45" cy="481.46" r="1.95" fill="#fff" stroke="#5365b2" stroke-width="1.75"/>
<circle cx="830.42" cy="406.19" r="1.95" fill="#fff" stroke="#5365b2" stroke-width="1.75"/>
<circle cx="839.39" cy="431.67" r="1.95" fill="#fff" stroke="#5365b2" stroke-width="1.75"/>
<circle cx="848.35" cy="518.94" r="1.95" fill="#fff" stroke="#5365b2" stroke-width="1.75"/>
<circle cx="857.32" cy="544.42" r="1.95" fill="#fff" stroke="#5365b2" stroke-width="1.75"/>
<circle cx="866.29" cy="489.95" r="1.95" fill="#fff" stroke="#5365b2" stroke-width="1.75"/>
<circle cx="875.26" cy="419.08" r="1.95" fill="#fff" stroke="#5365b2" stroke-width="1.75"/>
<circle cx="884.23" cy="445.14" r="1.95" fill="#fff" stroke="#5365b2" stroke-width="1.75"/>
<circle cx="893.2" cy="522.16" r="1.95" fill="#fff" stroke="#5365b2" stroke-width="1.75"/>
<circle cx="902.17" cy="546.47" r="1.95" fill="#fff" stroke="#5365b2" stroke-width="1.75"/>
<circle cx="911.13" cy="485.85" r="1.95" fill="#fff" stroke="#5365b2" stroke-width="1.75"/>
<circle cx="920.1" cy="416.15" r="1.95" fill="#fff" stroke="#5365b2" stroke-width="1.75"/>
<circle cx="929.07" cy="441.04" r="1.95" fill="#fff" stroke="#5365b2" stroke-width="1.75"/>
<circle cx="938.04" cy="516.31" r="1.95" fill="#fff" stroke="#5365b2" stroke-width="1.75"/>
<circle cx="947.01" cy="547.06" r="1.95" fill="#fff" stroke="#5365b2" stroke-width="1.75"/>
<circle cx="955.98" cy="484.97" r="1.95" fill="#fff" stroke="#5365b2" stroke-width="1.75"/>
<circle cx="964.94" cy="412.64" r="1.95" fill="#fff" stroke="#5365b2" stroke-width="1.75"/>
<circle cx="973.91" cy="443.09" r="1.95" fill="#fff" stroke="#5365b2" stroke-width="1.75"/>
<circle cx="982.88" cy="532.41" r="1.95" fill="#fff" stroke="#5365b2" stroke-width="1.75"/>
<circle cx="991.85" cy="565.51" r="1.95" fill="#fff" stroke="#5365b2" stroke-width="1.75"/>
<circle cx="1000.82" cy="499.32" r="1.95" fill="#fff" stroke="#5365b2" stroke-width="1.75"/>
<circle cx="1009.79" cy="435.77" r="1.95" fill="#fff" stroke="#5365b2" stroke-width="1.75"/>
<circle cx="1018.76" cy="458.61" r="1.95" fill="#fff" stroke="#5365b2" stroke-width="1.75"/>
<circle cx="1027.72" cy="542.96" r="1.95" fill="#fff" stroke="#5365b2" stroke-width="1.75"/>
<circle cx="1036.69" cy="563.46" r="1.95" fill="#fff" stroke="#5365b2" stroke-width="1.75"/>
<circle cx="1045.66" cy="495.51" r="1.95" fill="#fff" stroke="#5365b2" stroke-width="1.75"/>
<circle cx="1054.63" cy="435.19" r="1.95" fill="#fff" stroke="#5365b2" stroke-width="1.75"/>
<circle cx="1063.6" cy="455.98" r="1.95" fill="#fff" stroke="#5365b2" stroke-width="1.75"/>
<circle cx="1072.57" cy="545.89" r="1.95" fill="#fff" stroke="#5365b2" stroke-width="1.75"/>
<circle cx="1081.54" cy="562.58" r="1.95" fill="#fff" stroke="#5365b2" stroke-width="1.75"/>
<circle cx="1090.5" cy="495.22" r="1.95" fill="#fff" stroke="#5365b2" stroke-width="1.75"/>
<circle cx="1099.47" cy="431.67" r="1.95" fill="#fff" stroke="#5365b2" stroke-width="1.75"/>
<circle cx="1108.44" cy="458.91" r="1.95" fill="#fff" stroke="#5365b2" stroke-width="1.75"/>
<circle cx="1117.41" cy="540.32" r="1.95" fill="#fff" stroke="#5365b2" stroke-width="1.75"/>
<circle cx="1126.38" cy="559.36" r="1.95" fill="#fff" stroke="#5365b2" stroke-width="1.75"/>
<circle cx="1135.35" cy="494.34" r="1.95" fill="#fff" stroke="#5365b2" stroke-width="1.75"/>
<circle cx="1144.31" cy="433.43" r="1.95" fill="#fff" stroke="#5365b2" stroke-width="1.75"/>
<circle cx="1153.28" cy="454.22" r="1.95" fill="#fff" stroke="#5365b2" stroke-width="1.75"/>
<circle cx="1162.25" cy="543.84" r="1.95" fill="#fff" stroke="#5365b2" stroke-width="1.75"/>
<circle cx="1171.22" cy="562.29" r="1.95" fill="#fff" stroke="#5365b2" stroke-width="1.75"/>
<circle cx="1180.19" cy="491.41" r="1.95" fill="#fff" stroke="#5365b2" stroke-width="1.75"/>
<circle cx="1189.16" cy="426.69" r="1.95" fill="#fff" stroke="#5365b2" stroke-width="1.75"/>
<circle cx="1198.13" cy="450.12" r="1.95" fill="#fff" stroke="#5365b2" stroke-width="1.75"/>
<circle cx="1207.09" cy="543.25" r="1.95" fill="#fff" stroke="#5365b2" stroke-width="1.75"/>
<circle cx="1216.06" cy="557.89" r="1.95" fill="#fff" stroke="#5365b2" stroke-width="1.75"/>
<circle cx="1225.03" cy="490.83" r="1.95" fill="#fff" stroke="#5365b2" stroke-width="1.75"/>
<circle cx="1234" cy="430.79" r="1.95" fill="#fff" stroke="#5365b2" stroke-width="1.75"/>
<text x="16.3" y="362.7" class="tt">Channel_2</text>
<g transform="translate(1280,358)"><path fill="#5f6368" d="M19 12h-2v3h-3v2h5v-5zM7 9h3V7H5v5h2V9zm14-6H3c-1.1 0-2 .9-2 2v14c0 1.1.9 2 2 2h18c1.1 0 2-.9 2-2V5c0-1.1-.9-2-2-2zm0 16.01H3V4.99h18v14.02z"/></g>
<line x1="101.5" y1="665.5" x2="1234.2" y2="665.5" stroke="#dfe3e9" stroke-width="1"/>
<line x1="101.5" y1="706.5" x2="1234.2" y2="706.5" stroke="#dfe3e9" stroke-width="1"/>
<line x1="101.5" y1="747.5" x2="1234.2" y2="747.5" stroke="#dfe3e9" stroke-width="1"/>
<line x1="101.5" y1="788.5" x2="1234.2" y2="788.5" stroke="#dfe3e9" stroke-width="1"/>
<line x1="101.5" y1="829.5" x2="1234.2" y2="829.5" stroke="#dfe3e9" stroke-width="1"/>
<text x="93" y="668.5" text-anchor="end" class="yl">5,000</text>
<text x="93" y="709.5" text-anchor="end" class="yl">4,000</text>
<text x="93" y="750.5" text-anchor="end" class="yl">3,000</text>
<text x="93" y="791.5" text-anchor="end" class="yl">2,000</text>
<text x="93" y="832.5" text-anchor="end" class="yl">1,000</text>
<text x="93" y="873.5" text-anchor="end" class="yl">0</text>
<line x1="101.5" y1="870.5" x2="1234.2" y2="870.5" stroke="#5c5e66" stroke-width="1"/>
<line x1="101.5" y1="870.5" x2="101.5" y2="875.0" stroke="#5c5e66" stroke-width="1"/>
<text x="101.5" y="886.7" text-anchor="middle" class="xl">0</text>
<line x1="137.5" y1="870.5" x2="137.5" y2="875.0" stroke="#5c5e66" stroke-width="1"/>
<text x="137.18" y="886.7" text-anchor="middle" class="xl">4</text>
<line x1="173.5" y1="870.5" x2="173.5" y2="875.0" stroke="#5c5e66" stroke-width="1"/>
<text x="172.85" y="886.7" text-anchor="middle" class="xl">8</text>
<line x1="208.5" y1="870.5" x2="208.5" y2="875.0" stroke="#5c5e66" stroke-width="1"/>
<text x="208.53" y="886.7" text-anchor="middle" class="xl">12</text>
<line x1="244.5" y1="870.5" x2="244.5" y2="875.0" stroke="#5c5e66" stroke-width="1"/>
<text x="244.2" y="886.7" text-anchor="middle" class="xl">16</text>
<line x1="280.5" y1="870.5" x2="280.5" y2="875.0" stroke="#5c5e66" stroke-width="1"/>
<text x="279.88" y="886.7" text-anchor="middle" class="xl">20</text>
<line x1="315.5" y1="870.5" x2="315.5" y2="875.0" stroke="#5c5e66" stroke-width="1"/>
<text x="315.55" y="886.7" text-anchor="middle" class="xl">24</text>
<line x1="351.5" y1="870.5" x2="351.5" y2="875.0" stroke="#5c5e66" stroke-width="1"/>
<text x="351.23" y="886.7" text-anchor="middle" class="xl">28</text>
<line x1="387.5" y1="870.5" x2="387.5" y2="875.0" stroke="#5c5e66" stroke-width="1"/>
<text x="386.9" y="886.7" text-anchor="middle" class="xl">32</text>
<line x1="422.5" y1="870.5" x2="422.5" y2="875.0" stroke="#5c5e66" stroke-width="1"/>
<text x="422.58" y="886.7" text-anchor="middle" class="xl">36</text>
<line x1="458.5" y1="870.5" x2="458.5" y2="875.0" stroke="#5c5e66" stroke-width="1"/>
<text x="458.26" y="886.7" text-anchor="middle" class="xl">40</text>
<line x1="494.5" y1="870.5" x2="494.5" y2="875.0" stroke="#5c5e66" stroke-width="1"/>
<text x="493.93" y="886.7" text-anchor="middle" class="xl">44</text>
<line x1="529.5" y1="870.5" x2="529.5" y2="875.0" stroke="#5c5e66" stroke-width="1"/>
<text x="529.61" y="886.7" text-anchor="middle" class="xl">48</text>
<line x1="565.5" y1="870.5" x2="565.5" y2="875.0" stroke="#5c5e66" stroke-width="1"/>
<text x="565.28" y="886.7" text-anchor="middle" class="xl">52</text>
<line x1="601.5" y1="870.5" x2="601.5" y2="875.0" stroke="#5c5e66" stroke-width="1"/>
<text x="600.96" y="886.7" text-anchor="middle" class="xl">56</text>
<line x1="636.5" y1="870.5" x2="636.5" y2="875.0" stroke="#5c5e66" stroke-width="1"/>
<text x="636.63" y="886.7" text-anchor="middle" class="xl">60</text>
<line x1="672.5" y1="870.5" x2="672.5" y2="875.0" stroke="#5c5e66" stroke-width="1"/>
<text x="672.31" y="886.7" text-anchor="middle" class="xl">64</text>
<line x1="708.5" y1="870.5" x2="708.5" y2="875.0" stroke="#5c5e66" stroke-width="1"/>
<text x="707.99" y="886.7" text-anchor="middle" class="xl">68</text>
<line x1="743.5" y1="870.5" x2="743.5" y2="875.0" stroke="#5c5e66" stroke-width="1"/>
<text x="743.66" y="886.7" text-anchor="middle" class="xl">72</text>
<line x1="779.5" y1="870.5" x2="779.5" y2="875.0" stroke="#5c5e66" stroke-width="1"/>
<text x="779.34" y="886.7" text-anchor="middle" class="xl">76</text>
<line x1="815.5" y1="870.5" x2="815.5" y2="875.0" stroke="#5c5e66" stroke-width="1"/>
<text x="815.01" y="886.7" text-anchor="middle" class="xl">80</text>
<line x1="850.5" y1="870.5" x2="850.5" y2="875.0" stroke="#5c5e66" stroke-width="1"/>
<text x="850.69" y="886.7" text-anchor="middle" class="xl">84</text>
<line x1="886.5" y1="870.5" x2="886.5" y2="875.0" stroke="#5c5e66" stroke-width="1"/>
<text x="886.36" y="886.7" text-anchor="middle" class="xl">88</text>
<line x1="922.5" y1="870.5" x2="922.5" y2="875.0" stroke="#5c5e66" stroke-width="1"/>
<text x="922.04" y="886.7" text-anchor="middle" class="xl">92</text>
<line x1="957.5" y1="870.5" x2="957.5" y2="875.0" stroke="#5c5e66" stroke-width="1"/>
<text x="957.71" y="886.7" text-anchor="middle" class="xl">96</text>
<line x1="993.5" y1="870.5" x2="993.5" y2="875.0" stroke="#5c5e66" stroke-width="1"/>
<text x="993.39" y="886.7" text-anchor="middle" class="xl">100</text>
<line x1="1029.5" y1="870.5" x2="1029.5" y2="875.0" stroke="#5c5e66" stroke-width="1"/>
<text x="1029.07" y="886.7" text-anchor="middle" class="xl">104</text>
<line x1="1064.5" y1="870.5" x2="1064.5" y2="875.0" stroke="#5c5e66" stroke-width="1"/>
<text x="1064.74" y="886.7" text-anchor="middle" class="xl">108</text>
<line x1="1100.5" y1="870.5" x2="1100.5" y2="875.0" stroke="#5c5e66" stroke-width="1"/>
<text x="1100.42" y="886.7" text-anchor="middle" class="xl">112</text>
<line x1="1136.5" y1="870.5" x2="1136.5" y2="875.0" stroke="#5c5e66" stroke-width="1"/>
<text x="1136.09" y="886.7" text-anchor="middle" class="xl">116</text>
<line x1="1172.5" y1="870.5" x2="1172.5" y2="875.0" stroke="#5c5e66" stroke-width="1"/>
<text x="1171.77" y="886.7" text-anchor="middle" class="xl">120</text>
<line x1="1207.5" y1="870.5" x2="1207.5" y2="875.0" stroke="#5c5e66" stroke-width="1"/>
<text x="1207.44" y="886.7" text-anchor="middle" class="xl">124</text>
<polyline points="101.5,702.89 110.42,705.11 119.34,703.59 128.26,702.69 137.18,700.8 146.09,703.3 155.01,705.88 163.93,703.88 172.85,702.07 181.77,701.5 190.69,703.59 199.61,705.68 208.53,703.59 217.45,702.28 226.36,702.07 235.28,704.7 244.2,705.68 253.12,702.89 262.04,701.17 270.96,700.8 279.88,703.01 288.8,703.3 297.72,700.8 306.63,700.6 315.55,699.9 324.47,702.89 333.39,703.88 342.31,701.17 351.23,700.8 360.15,700.6 369.07,704.12 377.99,705.88 386.9,702.07 395.82,702.28 404.74,701.01 413.66,703.51 422.58,704.7 431.5,700.8 440.42,700.6 449.34,700.39 458.26,701.7 467.17,704.12 476.09,700.19 485.01,699.98 493.93,700.19 502.85,701.5 511.77,703.88 520.69,700.51 529.61,699.98 538.53,699.41 547.44,700.6 556.36,703.3 565.28,700.19 574.2,699.61 583.12,700.19 592.04,700.8 600.96,704.12 609.88,700.19 618.8,699.9 627.71,699.98 636.63,701.7 645.55,704.7 654.47,700.8 663.39,700.6 672.31,700.19 681.23,702.48 690.15,704.7 699.07,701.01 707.99,700.6 716.9,700.8 725.82,702.07 734.74,704.12 743.66,700.19 752.58,699.61 761.5,700.51 770.42,701.7 779.34,704.2 788.26,701.01 797.17,700.8 806.09,703.3 815.01,702.69 823.93,705.11 832.85,702.28 841.77,699.98 850.69,703.3 859.61,703.88 868.53,704.49 877.44,703.01 886.36,700.19 895.28,703.59 904.2,703.3 913.12,705.11 922.04,702.07 930.96,700.6 939.88,703.3 948.8,703.3 957.71,704.2 966.63,702.07 975.55,699.08 984.47,702.28 993.39,702.69 1002.31,703.3 1011.23,701.5 1020.15,699.08 1029.07,702.07 1037.98,703.59 1046.9,702.28 1055.82,701.7 1064.74,698.71 1073.66,702.28 1082.58,702.69 1091.5,702.28 1100.42,702.07 1109.34,698.46 1118.25,703.51 1127.17,702.69 1136.09,703.3 1145.01,701.7 1153.93,699.41 1162.85,703.01 1171.77,703.3 1180.69,703.51 1189.61,701.01 1198.52,699.08 1207.44,703.01 1216.36,703.3 1225.28,703.3 1234.2,702.07" fill="none" stroke="#5365b2" stroke-width="1.9" stroke-linejoin="round"/>
<circle cx="101.5" cy="702.89" r="1.95" fill="#fff" stroke="#5365b2" stroke-width="1.75"/>
<circle cx="110.42" cy="705.11" r="1.95" fill="#fff" stroke="#5365b2" stroke-width="1.75"/>
<circle cx="119.34" cy="703.59" r="1.95" fill="#fff" stroke="#5365b2" stroke-width="1.75"/>
<circle cx="128.26" cy="702.69" r="1.95" fill="#fff" stroke="#5365b2" stroke-width="1.75"/>
<circle cx="137.18" cy="700.8" r="1.95" fill="#fff" stroke="#5365b2" stroke-width="1.75"/>
<circle cx="146.09" cy="703.3" r="1.95" fill="#fff" stroke="#5365b2" stroke-width="1.75"/>
<circle cx="155.01" cy="705.88" r="1.95" fill="#fff" stroke="#5365b2" stroke-width="1.75"/>
<circle cx="163.93" cy="703.88" r="1.95" fill="#fff" stroke="#5365b2" stroke-width="1.75"/>
<circle cx="172.85" cy="702.07" r="1.95" fill="#fff" stroke="#5365b2" stroke-width="1.75"/>
<circle cx="181.77" cy="701.5" r="1.95" fill="#fff" stroke="#5365b2" stroke-width="1.75"/>
<circle cx="190.69" cy="703.59" r="1.95" fill="#fff" stroke="#5365b2" stroke-width="1.75"/>
<circle cx="199.61" cy="705.68" r="1.95" fill="#fff" stroke="#5365b2" stroke-width="1.75"/>
<circle cx="208.53" cy="703.59" r="1.95" fill="#fff" stroke="#5365b2" stroke-width="1.75"/>
<circle cx="217.45" cy="702.28" r="1.95" fill="#fff" stroke="#5365b2" stroke-width="1.75"/>
<circle cx="226.36" cy="702.07" r="1.95" fill="#fff" stroke="#5365b2" stroke-width="1.75"/>
<circle cx="235.28" cy="704.7" r="1.95" fill="#fff" stroke="#5365b2" stroke-width="1.75"/>
<circle cx="244.2" cy="705.68" r="1.95" fill="#fff" stroke="#5365b2" stroke-width="1.75"/>
<circle cx="253.12" cy="702.89" r="1.95" fill="#fff" stroke="#5365b2" stroke-width="1.75"/>
<circle cx="262.04" cy="701.17" r="1.95" fill="#fff" stroke="#5365b2" stroke-width="1.75"/>
<circle cx="270.96" cy="700.8" r="1.95" fill="#fff" stroke="#5365b2" stroke-width="1.75"/>
<circle cx="279.88" cy="703.01" r="1.95" fill="#fff" stroke="#5365b2" stroke-width="1.75"/>
<circle cx="288.8" cy="703.3" r="1.95" fill="#fff" stroke="#5365b2" stroke-width="1.75"/>
<circle cx="297.72" cy="700.8" r="1.95" fill="#fff" stroke="#5365b2" stroke-width="1.75"/>
<circle cx="306.63" cy="700.6" r="1.95" fill="#fff" stroke="#5365b2" stroke-width="1.75"/>
<circle cx="315.55" cy="699.9" r="1.95" fill="#fff" stroke="#5365b2" stroke-width="1.75"/>
<circle cx="324.47" cy="702.89" r="1.95" fill="#fff" stroke="#5365b2" stroke-width="1.75"/>
<circle cx="333.39" cy="703.88" r="1.95" fill="#fff" stroke="#5365b2" stroke-width="1.75"/>
<circle cx="342.31" cy="701.17" r="1.95" fill="#fff" stroke="#5365b2" stroke-width="1.75"/>
<circle cx="351.23" cy="700.8" r="1.95" fill="#fff" stroke="#5365b2" stroke-width="1.75"/>
<circle cx="360.15" cy="700.6" r="1.95" fill="#fff" stroke="#5365b2" stroke-width="1.75"/>
<circle cx="369.07" cy="704.12" r="1.95" fill="#fff" stroke="#5365b2" stroke-width="1.75"/>
<circle cx="377.99" cy="705.88" r="1.95" fill="#fff" stroke="#5365b2" stroke-width="1.75"/>
<circle cx="386.9" cy="702.07" r="1.95" fill="#fff" stroke="#5365b2" stroke-width="1.75"/>
<circle cx="395.82" cy="702.28" r="1.95" fill="#fff" stroke="#5365b2" stroke-width="1.75"/>
<circle cx="404.74" cy="701.01" r="1.95" fill="#fff" stroke="#5365b2" stroke-width="1.75"/>
<circle cx="413.66" cy="703.51" r="1.95" fill="#fff" stroke="#5365b2" stroke-width="1.75"/>
<circle cx="422.58" cy="704.7" r="1.95" fill="#fff" stroke="#5365b2" stroke-width="1.75"/>
<circle cx="431.5" cy="700.8" r="1.95" fill="#fff" stroke="#5365b2" stroke-width="1.75"/>
<circle cx="440.42" cy="700.6" r="1.95" fill="#fff" stroke="#5365b2" stroke-width="1.75"/>
<circle cx="449.34" cy="700.39" r="1.95" fill="#fff" stroke="#5365b2" stroke-width="1.75"/>
<circle cx="458.26" cy="701.7" r="1.95" fill="#fff" stroke="#5365b2" stroke-width="1.75"/>
<circle cx="467.17" cy="704.12" r="1.95" fill="#fff" stroke="#5365b2" stroke-width="1.75"/>
<circle cx="476.09" cy="700.19" r="1.95" fill="#fff" stroke="#5365b2" stroke-width="1.75"/>
<circle cx="485.01" cy="699.98" r="1.95" fill="#fff" stroke="#5365b2" stroke-width="1.75"/>
<circle cx="493.93" cy="700.19" r="1.95" fill="#fff" stroke="#5365b2" stroke-width="1.75"/>
<circle cx="502.85" cy="701.5" r="1.95" fill="#fff" stroke="#5365b2" stroke-width="1.75"/>
<circle cx="511.77" cy="703.88" r="1.95" fill="#fff" stroke="#5365b2" stroke-width="1.75"/>
<circle cx="520.69" cy="700.51" r="1.95" fill="#fff" stroke="#5365b2" stroke-width="1.75"/>
<circle cx="529.61" cy="699.98" r="1.95" fill="#fff" stroke="#5365b2" stroke-width="1.75"/>
<circle cx="538.53" cy="699.41" r="1.95" fill="#fff" stroke="#5365b2" stroke-width="1.75"/>
<circle cx="547.44" cy="700.6" r="1.95" fill="#fff" stroke="#5365b2" stroke-width="1.75"/>
<circle cx="556.36" cy="703.3" r="1.95" fill="#fff" stroke="#5365b2" stroke-width="1.75"/>
<circle cx="565.28" cy="700.19" r="1.95" fill="#fff" stroke="#5365b2" stroke-width="1.75"/>
<circle cx="574.2" cy="699.61" r="1.95" fill="#fff" stroke="#5365b2" stroke-width="1.75"/>
<circle cx="583.12" cy="700.19" r="1.95" fill="#fff" stroke="#5365b2" stroke-width="1.75"/>
<circle cx="592.04" cy="700.8" r="1.95" fill="#fff" stroke="#5365b2" stroke-width="1.75"/>
<circle cx="600.96" cy="704.12" r="1.95" fill="#fff" stroke="#5365b2" stroke-width="1.75"/>
<circle cx="609.88" cy="700.19" r="1.95" fill="#fff" stroke="#5365b2" stroke-width="1.75"/>
<circle cx="618.8" cy="699.9" r="1.95" fill="#fff" stroke="#5365b2" stroke-width="1.75"/>
<circle cx="627.71" cy="699.98" r="1.95" fill="#fff" stroke="#5365b2" stroke-width="1.75"/>
<circle cx="636.63" cy="701.7" r="1.95" fill="#fff" stroke="#5365b2" stroke-width="1.75"/>
<circle cx="645.55" cy="704.7" r="1.95" fill="#fff" stroke="#5365b2" stroke-width="1.75"/>
<circle cx="654.47" cy="700.8" r="1.95" fill="#fff" stroke="#5365b2" stroke-width="1.75"/>
<circle cx="663.39" cy="700.6" r="1.95" fill="#fff" stroke="#5365b2" stroke-width="1.75"/>
<circle cx="672.31" cy="700.19" r="1.95" fill="#fff" stroke="#5365b2" stroke-width="1.75"/>
<circle cx="681.23" cy="702.48" r="1.95" fill="#fff" stroke="#5365b2" stroke-width="1.75"/>
<circle cx="690.15" cy="704.7" r="1.95" fill="#fff" stroke="#5365b2" stroke-width="1.75"/>
<circle cx="699.07" cy="701.01" r="1.95" fill="#fff" stroke="#5365b2" stroke-width="1.75"/>
<circle cx="707.99" cy="700.6" r="1.95" fill="#fff" stroke="#5365b2" stroke-width="1.75"/>
<circle cx="716.9" cy="700.8" r="1.95" fill="#fff" stroke="#5365b2" stroke-width="1.75"/>
<circle cx="725.82" cy="702.07" r="1.95" fill="#fff" stroke="#5365b2" stroke-width="1.75"/>
<circle cx="734.74" cy="704.12" r="1.95" fill="#fff" stroke="#5365b2" stroke-width="1.75"/>
<circle cx="743.66" cy="700.19" r="1.95" fill="#fff" stroke="#5365b2" stroke-width="1.75"/>
<circle cx="752.58" cy="699.61" r="1.95" fill="#fff" stroke="#5365b2" stroke-width="1.75"/>
<circle cx="761.5" cy="700.51" r="1.95" fill="#fff" stroke="#5365b2" stroke-width="1.75"/>
<circle cx="770.42" cy="701.7" r="1.95" fill="#fff" stroke="#5365b2" stroke-width="1.75"/>
<circle cx="779.34" cy="704.2" r="1.95" fill="#fff" stroke="#5365b2" stroke-width="1.75"/>
<circle cx="788.26" cy="701.01" r="1.95" fill="#fff" stroke="#5365b2" stroke-width="1.75"/>
<circle cx="797.17" cy="700.8" r="1.95" fill="#fff" stroke="#5365b2" stroke-width="1.75"/>
<circle cx="806.09" cy="703.3" r="1.95" fill="#fff" stroke="#5365b2" stroke-width="1.75"/>
<circle cx="815.01" cy="702.69" r="1.95" fill="#fff" stroke="#5365b2" stroke-width="1.75"/>
<circle cx="823.93" cy="705.11" r="1.95" fill="#fff" stroke="#5365b2" stroke-width="1.75"/>
<circle cx="832.85" cy="702.28" r="1.95" fill="#fff" stroke="#5365b2" stroke-width="1.75"/>
<circle cx="841.77" cy="699.98" r="1.95" fill="#fff" stroke="#5365b2" stroke-width="1.75"/>
<circle cx="850.69" cy="703.3" r="1.95" fill="#fff" stroke="#5365b2" stroke-width="1.75"/>
<circle cx="859.61" cy="703.88" r="1.95" fill="#fff" stroke="#5365b2" stroke-width="1.75"/>
<circle cx="868.53" cy="704.49" r="1.95" fill="#fff" stroke="#5365b2" stroke-width="1.75"/>
<circle cx="877.44" cy="703.01" r="1.95" fill="#fff" stroke="#5365b2" stroke-width="1.75"/>
<circle cx="886.36" cy="700.19" r="1.95" fill="#fff" stroke="#5365b2" stroke-width="1.75"/>
<circle cx="895.28" cy="703.59" r="1.95" fill="#fff" stroke="#5365b2" stroke-width="1.75"/>
<circle cx="904.2" cy="703.3" r="1.95" fill="#fff" stroke="#5365b2" stroke-width="1.75"/>
<circle cx="913.12" cy="705.11" r="1.95" fill="#fff" stroke="#5365b2" stroke-width="1.75"/>
<circle cx="922.04" cy="702.07" r="1.95" fill="#fff" stroke="#5365b2" stroke-width="1.75"/>
<circle cx="930.96" cy="700.6" r="1.95" fill="#fff" stroke="#5365b2" stroke-width="1.75"/>
<circle cx="939.88" cy="703.3" r="1.95" fill="#fff" stroke="#5365b2" stroke-width="1.75"/>
<circle cx="948.8" cy="703.3" r="1.95" fill="#fff" stroke="#5365b2" stroke-width="1.75"/>
<circle cx="957.71" cy="704.2" r="1.95" fill="#fff" stroke="#5365b2" stroke-width="1.75"/>
<circle cx="966.63" cy="702.07" r="1.95" fill="#fff" stroke="#5365b2" stroke-width="1.75"/>
<circle cx="975.55" cy="699.08" r="1.95" fill="#fff" stroke="#5365b2" stroke-width="1.75"/>
<circle cx="984.47" cy="702.28" r="1.95" fill="#fff" stroke="#5365b2" stroke-width="1.75"/>
<circle cx="993.39" cy="702.69" r="1.95" fill="#fff" stroke="#5365b2" stroke-width="1.75"/>
<circle cx="1002.31" cy="703.3" r="1.95" fill="#fff" stroke="#5365b2" stroke-width="1.75"/>
<circle cx="1011.23" cy="701.5" r="1.95" fill="#fff" stroke="#5365b2" stroke-width="1.75"/>
<circle cx="1020.15" cy="699.08" r="1.95" fill="#fff" stroke="#5365b2" stroke-width="1.75"/>
<circle cx="1029.07" cy="702.07" r="1.95" fill="#fff" stroke="#5365b2" stroke-width="1.75"/>
<circle cx="1037.98" cy="703.59" r="1.95" fill="#fff" stroke="#5365b2" stroke-width="1.75"/>
<circle cx="1046.9" cy="702.28" r="1.95" fill="#fff" stroke="#5365b2" stroke-width="1.75"/>
<circle cx="1055.82" cy="701.7" r="1.95" fill="#fff" stroke="#5365b2" stroke-width="1.75"/>
<circle cx="1064.74" cy="698.71" r="1.95" fill="#fff" stroke="#5365b2" stroke-width="1.75"/>
<circle cx="1073.66" cy="702.28" r="1.95" fill="#fff" stroke="#5365b2" stroke-width="1.75"/>
<circle cx="1082.58" cy="702.69" r="1.95" fill="#fff" stroke="#5365b2" stroke-width="1.75"/>
<circle cx="1091.5" cy="702.28" r="1.95" fill="#fff" stroke="#5365b2" stroke-width="1.75"/>
<circle cx="1100.42" cy="702.07" r="1.95" fill="#fff" stroke="#5365b2" stroke-width="1.75"/>
<circle cx="1109.34" cy="698.46" r="1.95" fill="#fff" stroke="#5365b2" stroke-width="1.75"/>
<circle cx="1118.25" cy="703.51" r="1.95" fill="#fff" stroke="#5365b2" stroke-width="1.75"/>
<circle cx="1127.17" cy="702.69" r="1.95" fill="#fff" stroke="#5365b2" stroke-width="1.75"/>
<circle cx="1136.09" cy="703.3" r="1.95" fill="#fff" stroke="#5365b2" stroke-width="1.75"/>
<circle cx="1145.01" cy="701.7" r="1.95" fill="#fff" stroke="#5365b2" stroke-width="1.75"/>
<circle cx="1153.93" cy="699.41" r="1.95" fill="#fff" stroke="#5365b2" stroke-width="1.75"/>
<circle cx="1162.85" cy="703.01" r="1.95" fill="#fff" stroke="#5365b2" stroke-width="1.75"/>
<circle cx="1171.77" cy="703.3" r="1.95" fill="#fff" stroke="#5365b2" stroke-width="1.75"/>
<circle cx="1180.69" cy="703.51" r="1.95" fill="#fff" stroke="#5365b2" stroke-width="1.75"/>
<circle cx="1189.61" cy="701.01" r="1.95" fill="#fff" stroke="#5365b2" stroke-width="1.75"/>
<circle cx="1198.52" cy="699.08" r="1.95" fill="#fff" stroke="#5365b2" stroke-width="1.75"/>
<circle cx="1207.44" cy="703.01" r="1.95" fill="#fff" stroke="#5365b2" stroke-width="1.75"/>
<circle cx="1216.36" cy="703.3" r="1.95" fill="#fff" stroke="#5365b2" stroke-width="1.75"/>
<circle cx="1225.28" cy="703.3" r="1.95" fill="#fff" stroke="#5365b2" stroke-width="1.75"/>
<circle cx="1234.2" cy="702.07" r="1.95" fill="#fff" stroke="#5365b2" stroke-width="1.75"/>
<text x="16.3" y="638.7" class="tt">Channel_3</text>
<g transform="translate(1280,634)"><path fill="#5f6368" d="M19 12h-2v3h-3v2h5v-5zM7 9h3V7H5v5h2V9zm14-6H3c-1.1 0-2 .9-2 2v14c0 1.1.9 2 2 2h18c1.1 0 2-.9 2-2V5c0-1.1-.9-2-2-2zm0 16.01H3V4.99h18v14.02z"/></g>
</svg>
</body></html>
